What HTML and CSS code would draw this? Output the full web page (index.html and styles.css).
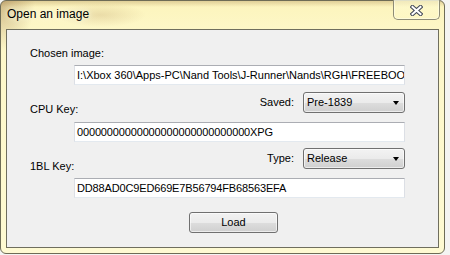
FILE: index.html
```html
<!DOCTYPE html>
<html>
<head>
<meta charset="utf-8">
<link rel="stylesheet" href="styles.css">
</head>
<body>
<div class="window">
  <div class="titlebar">
    <span class="title">Open an image</span>
    <div class="close">
      <svg width="13" height="11" viewBox="0 0 13 11">
        <path d="M2.5 2 L10.5 9 M10.5 2 L2.5 9" stroke="#454a58" stroke-width="4.2" stroke-linecap="square" fill="none"/>
        <path d="M2.5 2 L10.5 9 M10.5 2 L2.5 9" stroke="#ffffff" stroke-width="2" stroke-linecap="square" fill="none"/>
      </svg>
    </div>
  </div>
  <div class="client">
    <div class="form">
      <div class="label first">Chosen image:</div>
      <div class="field path">I:\Xbox 360\Apps-PC\Nand Tools\J-Runner\Nands\RGH\FREEBOOT</div>
      <div class="row r1">
        <span class="label lbl">CPU Key:</span>
        <div class="opt">
          <span class="optlabel">Saved:</span>
          <div class="combo"><span>Pre-1839</span><span class="arrow"></span></div>
        </div>
      </div>
      <div class="field">00000000000000000000000000000XPG</div>
      <div class="row r2">
        <span class="label lbl">1BL Key:</span>
        <div class="opt">
          <span class="optlabel">Type:</span>
          <div class="combo"><span>Release</span><span class="arrow"></span></div>
        </div>
      </div>
      <div class="field">DD88AD0C9ED669E7B56794FB68563EFA</div>
      <div class="btnrow"><div class="load">Load</div></div>
    </div>
  </div>
</div>
</body>
</html>
```

FILE: styles.css
```css
html, body {
  margin: 0;
  padding: 0;
}
body {
  background: #f4f4f2;
  width: 450px;
  height: 255px;
  overflow: hidden;
}
.window {
  width: 445px;
  height: 254px;
  box-sizing: border-box;
  border: 1px solid #6e6c56;
  border-radius: 6px;
  padding: 0 5px 5px 5px;
  display: flex;
  flex-direction: column;
  background:
    radial-gradient(ellipse 34px 50px at 0 0, rgba(150, 110, 60, 0.45), rgba(150, 110, 60, 0) 100%),
    radial-gradient(ellipse 45px 12px at 100px 14px, rgba(170, 130, 80, 0.22), rgba(170, 130, 80, 0) 100%),
    linear-gradient(to bottom, rgba(150, 110, 60, 0.28), rgba(150, 110, 60, 0) 6px),
    linear-gradient(to bottom, #fcf4bb, #fdf7c8 30px, #fefad2);
}
.titlebar {
  height: 28px;
  display: flex;
  align-items: flex-start;
  justify-content: space-between;
  flex-shrink: 0;
}
.title {
  font-family: "Liberation Sans", Arial, sans-serif;
  font-size: 12px;
  line-height: 15px;
  color: #000;
  margin-top: 6px;
  padding-left: 1px;
  text-shadow: 0 0 5px #fffbe0, 0 0 8px #fffbe0;
}
.close {
  width: 47px;
  height: 20px;
  box-sizing: border-box;
  margin-top: -1px;
  margin-right: -1px;
  border: 1px solid #8e8c76;
  border-top: none;
  border-radius: 0 0 5px 5px;
  background: linear-gradient(to bottom, rgba(255, 253, 215, 0.6), rgba(255, 250, 200, 0.2));
  box-shadow: inset 0 0 0 1px rgba(255, 255, 240, 0.5);
  display: flex;
  align-items: center;
  justify-content: center;
}
.close svg {
  display: block;
  margin-top: 1px;
}
.client {
  height: 219px;
  box-sizing: border-box;
  border: 1px solid #6f6e5e;
  background: #f0f0f0;
  font-family: "Liberation Sans", Arial, sans-serif;
  font-size: 11px;
  color: #000;
}
.form {
  padding-left: 23px;
  width: 375px;
}
.label {
  line-height: 13px;
  white-space: nowrap;
}
.label.first {
  margin-top: 17px;
}
.field {
  margin-top: 5px;
  margin-left: 44px;
  width: 331px;
  height: 20px;
  box-sizing: border-box;
  background: #fff;
  border: 1px solid;
  border-color: #abadb3 #dcdfe5 #e3e9ef #dcdfe5;
  padding: 1px 2px 0 2px;
  line-height: 17px;
  white-space: nowrap;
  overflow: hidden;
  letter-spacing: -0.15px;
}
.field.path {
  letter-spacing: 0;
}
.row {
  display: flex;
  align-items: flex-start;
}
.row + .field {
  margin-top: 0;
}
.r1 {
  height: 37px;
}
.r2 {
  height: 36px;
}
.lbl {
  margin-top: 18px;
}
.opt {
  margin-left: auto;
  display: flex;
  align-items: center;
  gap: 9px;
}
.r1 .opt {
  margin-top: 7px;
}
.r2 .opt {
  margin-top: 6px;
}
.optlabel {
  line-height: 13px;
}
.combo {
  width: 102px;
  height: 21px;
  box-sizing: border-box;
  border: 1px solid #707070;
  border-radius: 3px;
  background: linear-gradient(to bottom, #f3f3f3 0%, #ebebeb 50%, #dddddd 51%, #cfcfcf 100%);
  box-shadow: inset 0 0 0 1px rgba(255, 255, 255, 0.6);
  display: flex;
  align-items: center;
  justify-content: space-between;
  padding: 0 5px 0 3px;
  line-height: 13px;
}
.arrow {
  width: 0;
  height: 0;
  border-left: 3.5px solid transparent;
  border-right: 3.5px solid transparent;
  border-top: 4px solid #000;
}
.btnrow {
  display: flex;
  margin-top: 14px;
  padding-left: 159px;
}
.load {
  width: 89px;
  height: 21px;
  box-sizing: border-box;
  border: 1px solid #707070;
  border-radius: 3px;
  background: linear-gradient(to bottom, #f2f2f2 0%, #ebebeb 50%, #dddddd 51%, #cfcfcf 100%);
  box-shadow: inset 0 0 0 1px rgba(255, 255, 255, 0.6);
  display: flex;
  align-items: center;
  justify-content: center;
  line-height: 13px;
}
```
